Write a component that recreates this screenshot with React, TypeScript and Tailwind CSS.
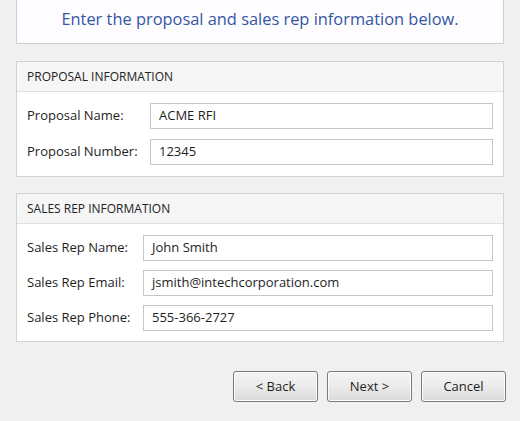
import React from 'react';

const Field = ({ label, value, labelWidth }: { label: string; value: string; labelWidth: string }) => (
  <div className="flex items-center">
    <div className={`${labelWidth} shrink-0 text-[13px] text-[#1e1e1e]`}>{label}</div>
    <div className="flex h-[26px] flex-1 items-center border border-[#c6c6ca] bg-white px-[8px] text-[13px] text-[#1e1e1e]">
      {value}
    </div>
  </div>
);

const Panel = ({ title, body, children }: { title: string; body: string; children: React.ReactNode }) => (
  <div className="border border-[#d3d3d6] bg-white">
    <div className="flex h-[30px] items-center border-b border-[#dedee0] bg-[#f6f6f6] px-[10px] text-[12px] text-[#222]">
      {title}
    </div>
    <div className={`flex flex-col px-[10px] ${body}`}>{children}</div>
  </div>
);

const WizardButton = ({ children }: { children: React.ReactNode }) => (
  <button
    type="button"
    className="h-[31px] w-[85px] rounded-[3px] border border-[#7a7a7a] bg-gradient-to-b from-[#f4f4f4] via-[#ebebeb] to-[#d9d9d9] text-[13px] text-[#1e1e1e] shadow-[inset_0_0_0_1px_#fcfcfc]"
  >
    {children}
  </button>
);

export default function App() {
  return (
    <div
      className="h-[421px] w-[520px] overflow-hidden bg-[#f0f0f0]"
      style={{ fontFamily: '"Open Sans", "Noto Sans", sans-serif' }}
    >
      <div className="mx-[16px] flex h-[44px] items-center justify-center border-x border-b border-[#cfcfd6] bg-[#fdfdff] pb-[4px] text-[16.4px] text-[#3655a3]">
        Enter the proposal and sales rep information below.
      </div>

      <div className="mx-[16px] mt-[17px]">
        <Panel title="PROPOSAL INFORMATION" body="gap-[10px] pt-[11px] pb-[11px]">
          <Field label="Proposal Name:" value="ACME RFI" labelWidth="w-[123px]" />
          <Field label="Proposal Number:" value="12345" labelWidth="w-[123px]" />
        </Panel>
      </div>

      <div className="mx-[16px] mt-[16px]">
        <Panel title="SALES REP INFORMATION" body="gap-[9px] pt-[11px] pb-[10px]">
          <Field label="Sales Rep Name:" value="John Smith" labelWidth="w-[116px]" />
          <Field label="Sales Rep Email:" value="jsmith@intechcorporation.com" labelWidth="w-[116px]" />
          <Field label="Sales Rep Phone:" value="555-366-2727" labelWidth="w-[116px]" />
        </Panel>
      </div>

      <div className="mr-[14px] mt-[29px] flex justify-end gap-[9px]">
        <WizardButton>&lt; Back</WizardButton>
        <WizardButton>Next &gt;</WizardButton>
        <WizardButton>Cancel</WizardButton>
      </div>
    </div>
  );
}
